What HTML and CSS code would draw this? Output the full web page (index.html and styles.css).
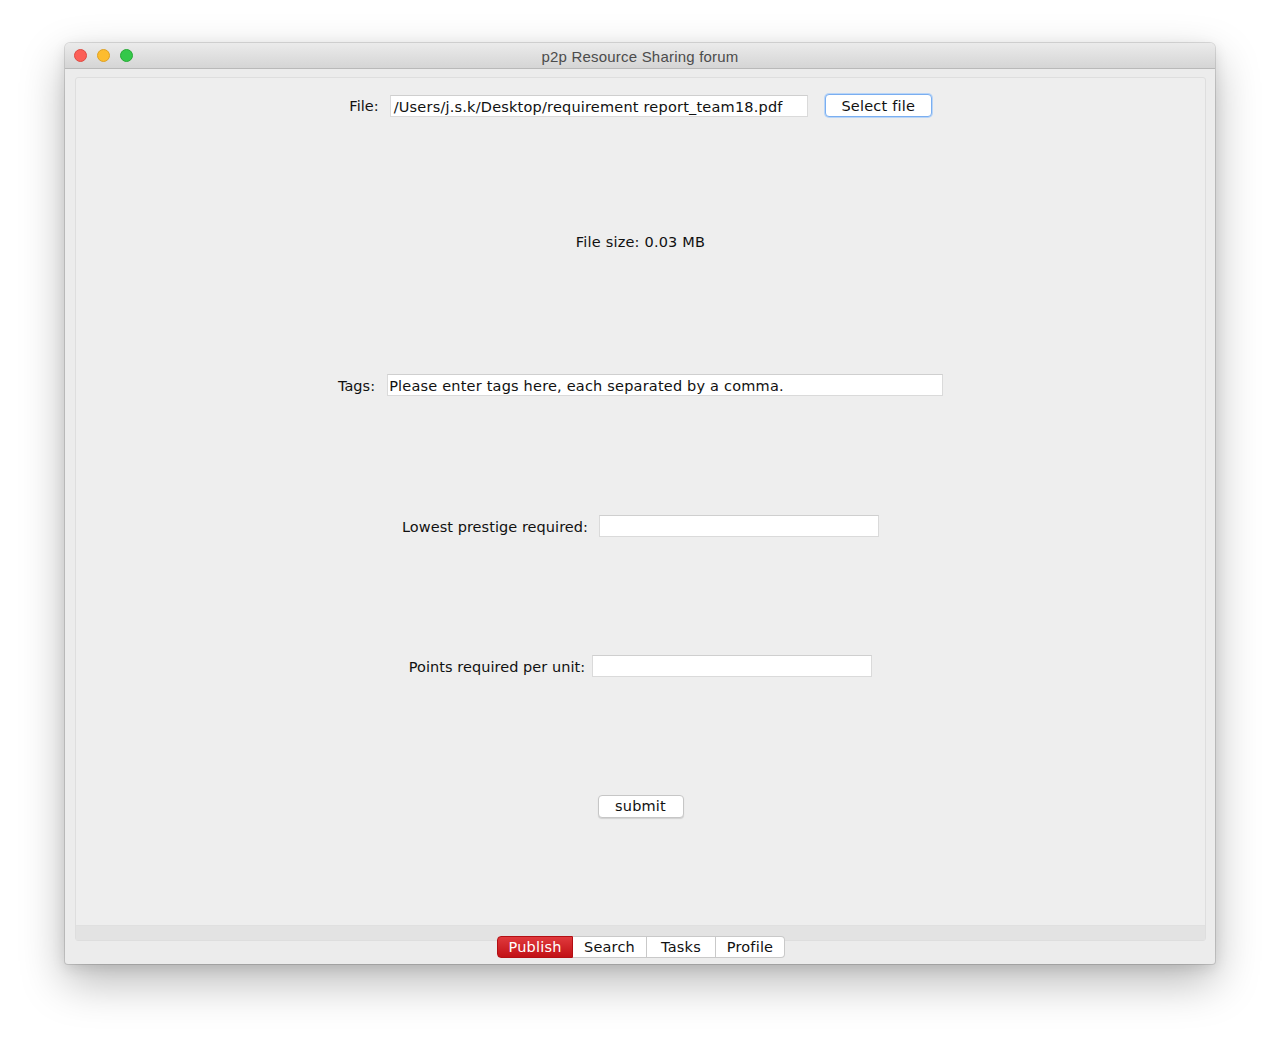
FILE: index.html
```html
<!DOCTYPE html>
<html>
<head>
<meta charset="utf-8">
<title>p2p Resource Sharing forum</title>
<link rel="stylesheet" href="styles.css">
</head>
<body>
<div class="window">
  <div class="titlebar">
    <div class="lights">
      <span class="light red"></span>
      <span class="light yellow"></span>
      <span class="light green"></span>
    </div>
    <div class="title">p2p Resource Sharing forum</div>
  </div>
  <div class="content">
    <div class="panel">
      <div class="form">
        <div class="row row-file">
          <span class="label">File:</span>
          <div class="field field-file">/Users/j.s.k/Desktop/requirement report_team18.pdf</div>
          <button class="btn btn-focus">Select file</button>
        </div>
        <div class="row row-size">
          <span class="label">File size: 0.03 MB</span>
        </div>
        <div class="row row-tags">
          <span class="label">Tags:</span>
          <div class="field field-tags">Please enter tags here, each separated by a comma.</div>
        </div>
        <div class="row row-prestige">
          <span class="label">Lowest prestige required:</span>
          <div class="field field-short"></div>
        </div>
        <div class="row row-points">
          <span class="label">Points required per unit:</span>
          <div class="field field-short"></div>
        </div>
        <div class="row row-submit">
          <button class="btn btn-submit">submit</button>
        </div>
      </div>
      <div class="strip"></div>
    </div>
    <div class="tabs">
      <span class="tab tab-active tab-publish">Publish</span>
      <span class="tab tab-search">Search</span>
      <span class="tab tab-tasks">Tasks</span>
      <span class="tab tab-profile">Profile</span>
    </div>
  </div>
</div>
</body>
</html>
```

FILE: styles.css
```css
* { box-sizing: border-box; }
html, body { margin: 0; padding: 0; }
body {
  background: #ffffff;
  width: 1280px;
  height: 1050px;
  overflow: hidden;
  font-family: "DejaVu Sans", "Lucida Grande", sans-serif;
}
.window {
  margin: 43px 0 0 65px;
  width: 1150px;
  height: 921px;
  background: #ececec;
  border-radius: 5px 5px 3px 3px;
  box-shadow: 0 0 0 1px rgba(0,0,0,0.12), 0 18px 45px rgba(0,0,0,0.28), 0 4px 14px rgba(0,0,0,0.10);
  display: flex;
  flex-direction: column;
  overflow: hidden;
}
.titlebar {
  height: 26px;
  flex: none;
  background: linear-gradient(#ebebeb, #d5d5d5);
  border-bottom: 1px solid #b9b9b9;
  display: flex;
  align-items: center;
  justify-content: center;
  position: relative;
}
.lights {
  position: absolute;
  left: 9px;
  top: 6px;
  display: flex;
  gap: 10px;
}
.light {
  width: 13px;
  height: 13px;
  border-radius: 50%;
  display: block;
}
.red { background: #fc5f57; border: 1px solid #de4a42; }
.yellow { background: #fdbc2e; border: 1px solid #dea123; }
.green { background: #34c84a; border: 1px solid #27aa35; }
.title {
  font-family: "Liberation Sans", Arial, sans-serif;
  font-size: 15px;
  letter-spacing: 0.2px;
  color: #4c4c4c;
  padding-top: 2px;
}
.content {
  flex: 1;
  display: flex;
  flex-direction: column;
  padding: 8px 9px 6px 10px;
}
.panel {
  flex: 1;
  border: 1px solid #dedede;
  border-radius: 3px;
  background: #eeeeee;
  display: flex;
  flex-direction: column;
  padding-top: 6px;
}
.form {
  flex: 1;
  display: grid;
  grid-template-rows: repeat(6, 1fr);
}
.strip {
  height: 15px;
  flex: none;
  background: #e3e3e3;
  border-top: 1px solid #e0e0e0;
}
.row {
  display: flex;
  justify-content: center;
  align-items: flex-start;
  padding-top: 10px;
  font-size: 14.5px;
  letter-spacing: 0.2px;
  color: #111;
}
.label {
  line-height: 24px;
  height: 24px;
  letter-spacing: 0.05px;
}
.row-size .label { letter-spacing: 0.2px; }
.field {
  height: 22px;
  background: #ffffff;
  border: 1px solid #dadada;
  border-top-color: #cfcfcf;
  line-height: 22px;
  padding-left: 3px;
  font-size: 14.5px;
  color: #111;
  white-space: nowrap;
  overflow: hidden;
}
.row-file { gap: 11px; }
.field-file { width: 418px; padding-left: 3px; margin-top: 1px; }
.row-file .btn { margin-left: 6px; }
.row-tags { gap: 12px; }
.field-tags { width: 556px; padding-left: 1px; }
.row-prestige { gap: 11px; }
.row-points { gap: 7px; }
.field-short { width: 280px; }
.row-size { padding-top: 6px; }
.btn {
  font-family: "DejaVu Sans", "Lucida Grande", sans-serif;
  font-size: 14.5px;
  letter-spacing: 0.2px;
  color: #111;
  background: #ffffff;
  border: 1px solid #c6c6c6;
  border-radius: 4px;
  height: 23px;
  padding: 0;
  line-height: 20px;
  box-shadow: 0 1px 1px rgba(0,0,0,0.12);
}
.btn-focus {
  width: 107px;
  border: 1px solid #7aaef0;
  box-shadow: 0 0 0 1px #b9d5f7;
}
.btn-submit {
  width: 86px;
  margin-left: 0;
}
.tabs {
  flex: none;
  display: flex;
  justify-content: center;
  margin-top: -5px;
  padding-left: 1px;
}
.tab {
  height: 22px;
  line-height: 21px;
  font-size: 14.5px;
  letter-spacing: 0.2px;
  text-align: center;
  background: #ffffff;
  color: #111;
  border: 1px solid #c9c9c9;
  border-left: none;
}
.tab-publish { width: 76px; border-radius: 4px 0 0 4px; border-left: 1px solid #b30f14; }
.tab-search { width: 74px; }
.tab-tasks { width: 69px; }
.tab-profile { width: 69px; border-radius: 0 4px 4px 0; }
.tab-active {
  background: linear-gradient(#e0393c, #c21116);
  color: #ffffff;
  border-color: #b30f14;
}
```
